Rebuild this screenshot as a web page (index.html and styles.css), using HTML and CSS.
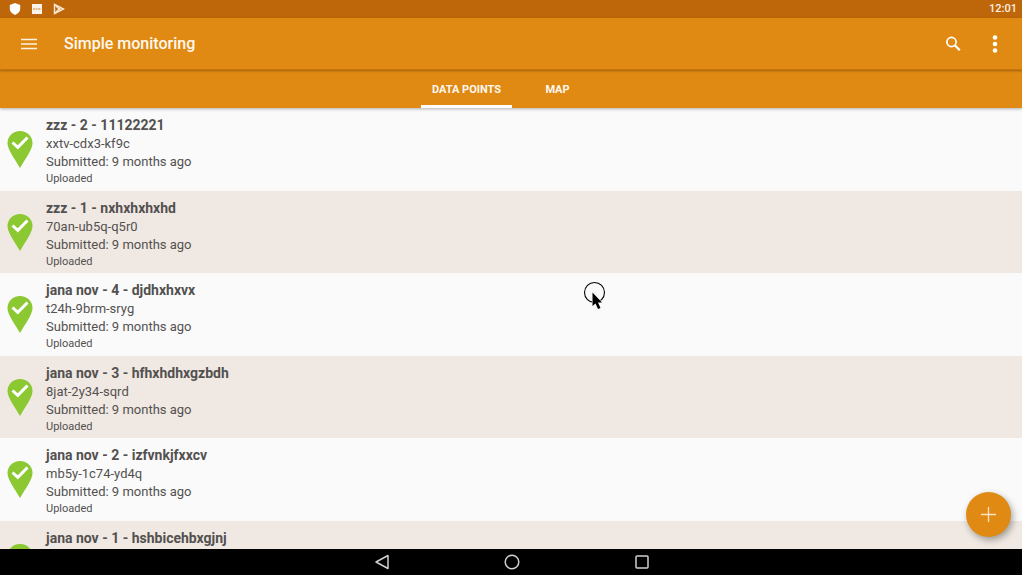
FILE: index.html
```
<!DOCTYPE html>
<html lang="en">
<head>
  <meta charset="UTF-8" />
  <meta name="viewport" content="width=device-width, initial-scale=1.0" />
  <title>Simple monitoring</title>
  <link rel="stylesheet" href="styles.css">
</head>
<body>
  <div class="status-bar">
    <div class="status-icons">
      <svg width="12" height="12" viewBox="0 0 12 12"><path d="M6 0 L11.200 2 V6 C11.200 9 8 11 6 12 C4 11 .8 9 .8 6 V2 Z" fill="#fff"/></svg>
      <svg width="10" height="10" viewBox="0 0 10 10"><path d="M0 0 H10 V10 H0 Z" fill="#fbf3ea"/><path d="M1 5 H9" stroke="#e5bd94" stroke-width="2" stroke-dasharray="2 .5"/></svg>
      <svg width="12" height="12" viewBox="0 0 12 12"><path d="M1.500 1.500 L10.500 6 L1.500 10.500 Z" fill="none" stroke="#fbe9d5" stroke-width="1.400"/><path d="M2 2 L8 8 M2 10 L8 4" stroke="#fbe9d5" stroke-width="1.200"/></svg>
    </div>
    <div class="clock">12:01</div>
  </div>

  <header class="toolbar">
    <button class="icon-button" aria-label="Menu">
      <svg width="16" height="12" viewBox="0 0 16 12"><path d="M0 1.500 H16 M0 6 H16 M0 10.500 H16" stroke="#fff3e0" stroke-width="1.600"/></svg>
    </button>
    <h1 class="app-title">Simple monitoring</h1>
    <button class="icon-button" aria-label="Search">
      <svg width="16" height="16" viewBox="0 0 16 16"><circle cx="6.500" cy="6" r="4.600" fill="none" stroke="#fff" stroke-width="1.700"/><path d="M9.800 9.300 L14.800 14.300" stroke="#fff" stroke-width="2.200"/></svg>
    </button>
    <button class="icon-button" aria-label="More options">
      <svg width="6" height="18" viewBox="0 0 6 18"><g fill="#fff"><circle cx="3" cy="2.500" r="2.300"/><circle cx="3" cy="9" r="2.300"/><circle cx="3" cy="15.500" r="2.300"/></g></svg>
    </button>
  </header>

  <nav class="tabs">
    <button class="tab active">DATA POINTS</button>
    <button class="tab">MAP</button>
  </nav>

  <main class="content">
    <ul class="list">
      <li class="item">
        <svg class="pin" viewBox="0 0 26 37"><path d="M13 0 C20 0 25.500 5 25.500 12 C25.500 19 18 28 13 37 C8 28 .5 19 .5 12 C.5 5 6 0 13 0 Z" fill="#8bc831"/><path d="M5.500 11.500 L10.800 16.300 L20.500 6.500" fill="none" stroke="#fff" stroke-width="3"/></svg>
        <div class="info">
          <h2>zzz - 2 - 11122221</h2>
          <p>xxtv-cdx3-kf9c</p>
          <p>Submitted: 9 months ago</p>
          <p class="status">Uploaded</p>
        </div>
      </li>
      <li class="item">
        <svg class="pin" viewBox="0 0 26 37"><path d="M13 0 C20 0 25.500 5 25.500 12 C25.500 19 18 28 13 37 C8 28 .5 19 .5 12 C.5 5 6 0 13 0 Z" fill="#8bc831"/><path d="M5.500 11.500 L10.800 16.300 L20.500 6.500" fill="none" stroke="#fff" stroke-width="3"/></svg>
        <div class="info">
          <h2>zzz - 1 - nxhxhxhxhd</h2>
          <p>70an-ub5q-q5r0</p>
          <p>Submitted: 9 months ago</p>
          <p class="status">Uploaded</p>
        </div>
      </li>
      <li class="item">
        <svg class="pin" viewBox="0 0 26 37"><path d="M13 0 C20 0 25.500 5 25.500 12 C25.500 19 18 28 13 37 C8 28 .5 19 .5 12 C.5 5 6 0 13 0 Z" fill="#8bc831"/><path d="M5.500 11.500 L10.800 16.300 L20.500 6.500" fill="none" stroke="#fff" stroke-width="3"/></svg>
        <div class="info">
          <h2>jana nov - 4 - djdhxhxvx</h2>
          <p>t24h-9brm-sryg</p>
          <p>Submitted: 9 months ago</p>
          <p class="status">Uploaded</p>
        </div>
      </li>
      <li class="item">
        <svg class="pin" viewBox="0 0 26 37"><path d="M13 0 C20 0 25.500 5 25.500 12 C25.500 19 18 28 13 37 C8 28 .5 19 .5 12 C.5 5 6 0 13 0 Z" fill="#8bc831"/><path d="M5.500 11.500 L10.800 16.300 L20.500 6.500" fill="none" stroke="#fff" stroke-width="3"/></svg>
        <div class="info">
          <h2>jana nov - 3 - hfhxhdhxgzbdh</h2>
          <p>8jat-2y34-sqrd</p>
          <p>Submitted: 9 months ago</p>
          <p class="status">Uploaded</p>
        </div>
      </li>
      <li class="item">
        <svg class="pin" viewBox="0 0 26 37"><path d="M13 0 C20 0 25.500 5 25.500 12 C25.500 19 18 28 13 37 C8 28 .5 19 .5 12 C.5 5 6 0 13 0 Z" fill="#8bc831"/><path d="M5.500 11.500 L10.800 16.300 L20.500 6.500" fill="none" stroke="#fff" stroke-width="3"/></svg>
        <div class="info">
          <h2>jana nov - 2 - izfvnkjfxxcv</h2>
          <p>mb5y-1c74-yd4q</p>
          <p>Submitted: 9 months ago</p>
          <p class="status">Uploaded</p>
        </div>
      </li>
      <li class="item">
        <svg class="pin" viewBox="0 0 26 37"><path d="M13 0 C20 0 25.500 5 25.500 12 C25.500 19 18 28 13 37 C8 28 .5 19 .5 12 C.5 5 6 0 13 0 Z" fill="#8bc831"/><path d="M5.500 11.500 L10.800 16.300 L20.500 6.500" fill="none" stroke="#fff" stroke-width="3"/></svg>
        <div class="info">
          <h2>jana nov - 1 - hshbicehbxgjnj</h2>
        </div>
      </li>
    </ul>
    <button class="fab" aria-label="Add data point">
      <svg width="15" height="15" viewBox="0 0 15 15"><path d="M7.500 0 V15 M0 7.500 H15" stroke="#fbe3c4" stroke-width="1.300"/></svg>
    </button>
  </main>

  <footer class="nav-bar">
    <button class="nav-button" aria-label="Back">
      <svg width="16" height="16" viewBox="0 0 16 16"><path d="M14 1.500 V14.500 L2 8 Z" fill="none" stroke="#d0d0d0" stroke-width="1.500" stroke-linejoin="round"/></svg>
    </button>
    <button class="nav-button" aria-label="Home">
      <svg width="16" height="16" viewBox="0 0 16 16"><circle cx="8" cy="8" r="6.800" fill="none" stroke="#d0d0d0" stroke-width="1.500"/></svg>
    </button>
    <button class="nav-button" aria-label="Recent apps">
      <svg width="16" height="16" viewBox="0 0 16 16"><rect x="2" y="2" width="12" height="12" rx="1" fill="none" stroke="#d0d0d0" stroke-width="1.500"/></svg>
    </button>
  </footer>

  <!-- touch pointer -->
  <svg class="pointer" width="24" height="30" viewBox="0 0 24 30">
    <circle cx="11.500" cy="11.500" r="10" fill="none" stroke="#000" stroke-width="1.100"/>
    <path d="M9.500 11.500 V25 L12.500 22.500 L15 28 L17.500 27 L15 21.500 H19 Z" fill="#000" stroke="#fff" stroke-width="1" paint-order="stroke"/>
  </svg>
</body>
</html>
```
FILE: styles.css
```
* {
  box-sizing: border-box;
}

body {
  margin: 0;
  height: 100vh;
  display: flex;
  flex-direction: column;
  overflow: hidden;
  position: relative;
  background-color: #fafafa;
  color: #535150;
  font-family: Roboto, "Liberation Sans", sans-serif;
}

svg {
  display: block;
}

button {
  border: none;
  padding: 0;
  background: none;
  color: inherit;
  font-family: inherit;
  cursor: pointer;
}

.status-bar {
  flex: none;
  height: 18px;
  padding: 0 5px 0 9px;
  display: flex;
  justify-content: space-between;
  align-items: center;
  background-color: #bd660a;
  color: #fff3e6;
}

.status-icons {
  display: flex;
  align-items: center;
  gap: 11px;
}

.clock {
  font-size: 11px;
  font-weight: 500;
  line-height: 18px;
}

.toolbar {
  flex: none;
  height: 52px;
  padding: 0 6px 0 8px;
  display: flex;
  align-items: center;
  background-color: #e08a14;
  color: #fff8ee;
  border-bottom: 1px solid #c4770f;
  box-shadow: 0 1px 2px rgba(100, 50, 0, 0.5);
  z-index: 2;
}

.icon-button {
  width: 42px;
  height: 42px;
  display: flex;
  justify-content: center;
  align-items: center;
}

.app-title {
  flex: 1;
  margin: 0 0 0 14px;
  font-size: 16px;
  font-weight: 500;
  line-height: 24px;
}

.tabs {
  flex: none;
  height: 38px;
  display: flex;
  justify-content: center;
  padding-left: 2px;
  background-color: #e08a14;
  box-shadow: 0 1px 3px rgba(0, 0, 0, 0.3);
  z-index: 1;
}

.tab {
  width: 91px;
  padding-top: 3px;
  border-bottom: 3px solid transparent;
  color: #fff8ee;
  font-size: 11px;
  font-weight: 700;
}

.tab.active {
  border-bottom-color: #fff;
}

.content {
  flex: 1;
  min-height: 0;
  position: relative;
}

.list {
  height: 100%;
  margin: 0;
  padding: 0;
  overflow: hidden;
  list-style: none;
}

.item {
  height: 83px;
  padding: 7px 7px 0;
  display: flex;
  gap: 13px;
}

.item:nth-child(even) {
  height: 82px;
  background-color: #f0e8e2;
}

.pin {
  flex: none;
  width: 26px;
  height: 37px;
  margin-top: 16px;
}

.info h2,
.info p {
  margin: 0;
}

.info h2 {
  font-size: 14px;
  font-weight: 700;
  line-height: 20px;
}

.info p {
  font-size: 13px;
  line-height: 18px;
}

.info .status {
  font-size: 11px;
  line-height: 16px;
}

.fab {
  position: absolute;
  right: 11px;
  bottom: 12px;
  width: 45px;
  height: 45px;
  display: flex;
  justify-content: center;
  align-items: center;
  border-radius: 50%;
  background-color: #e08a14;
  box-shadow: 2px 3px 7px rgba(0, 0, 0, 0.35);
}

.nav-bar {
  flex: none;
  height: 26px;
  padding-left: 2px;
  display: flex;
  justify-content: center;
  background-color: #000;
  z-index: 1;
}

.nav-button {
  width: 130px;
  display: flex;
  justify-content: center;
  align-items: center;
}

.pointer {
  position: absolute;
  left: 583px;
  top: 281px;
  pointer-events: none;
}
```
